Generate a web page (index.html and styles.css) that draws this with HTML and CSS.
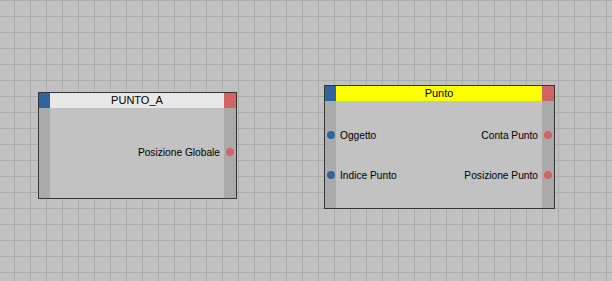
FILE: index.html
```html
<!DOCTYPE html>
<html lang="it">
<head>
  <meta charset="UTF-8">
  <meta name="viewport" content="width=device-width, initial-scale=1.0">
  <title>Nodi</title>
  <link rel="stylesheet" href="styles.css">
</head>
<body>
  <div class="canvas">
    <div class="node node-a">
      <div class="node-head">
        <span class="port-in"></span>
        <span class="title">PUNTO_A</span>
        <span class="port-out"></span>
      </div>
      <div class="node-body">
        <div class="row">
          <span></span>
          <span class="label right">Posizione Globale</span>
          <span class="dot out"></span>
        </div>
      </div>
    </div>

    <div class="node node-b">
      <div class="node-head">
        <span class="port-in"></span>
        <span class="title yellow">Punto</span>
        <span class="port-out"></span>
      </div>
      <div class="node-body">
        <div class="row">
          <span class="dot in"></span>
          <span class="label">Oggetto</span>
          <span class="label right">Conta Punto</span>
          <span class="dot out"></span>
        </div>
        <div class="row">
          <span class="dot in"></span>
          <span class="label">Indice Punto</span>
          <span class="label right">Posizione Punto</span>
          <span class="dot out"></span>
        </div>
      </div>
    </div>
  </div>
</body>
</html>
```

FILE: styles.css
```css
body {
  margin: 0;
  font-family: "Liberation Sans", Arial, sans-serif;
  font-size: 10.2px;
  color: #000;
}
.canvas {
  position: relative;
  width: 612px;
  height: 281px;
  background-color: #c1c1c1;
  background-image:
    linear-gradient(to right, #acacac 1px, transparent 1px),
    linear-gradient(to bottom, #acacac 1px, transparent 1px);
  background-size: 16px 16px;
  background-position: 14px 0;
  overflow: hidden;
}
.node {
  position: absolute;
  box-sizing: border-box;
  border: 1px solid #363636;
  display: flex;
  flex-direction: column;
  background: #c2c2c2;
}
.node-a {
  left: 38px;
  top: 92px;
  width: 199px;
  height: 107px;
}
.node-b {
  left: 324px;
  top: 85px;
  width: 231px;
  height: 124px;
}
.node-head {
  display: flex;
  height: 15px;
  flex-shrink: 0;
}
.port-in {
  width: 11px;
  background: #2f64a0;
}
.port-out {
  width: 12px;
  background: #d26466;
}
.title {
  flex: 1;
  background: #e8e8e8;
  text-align: center;
  line-height: 15px;
  font-size: 11px;
}
.title.yellow {
  background: #ffff00;
}
.node-body {
  flex: 1;
  display: flex;
  flex-direction: column;
  gap: 20px;
  background-image:
    linear-gradient(to right, #aaaaaa 11px, transparent 11px),
    linear-gradient(to left, #aaaaaa 12px, transparent 12px);
}
.node-a .node-body {
  padding-top: 34px;
}
.node-b .node-body {
  padding-top: 24px;
}
.row {
  display: grid;
  grid-template-columns: 11px auto 1fr 12px;
  align-items: center;
  height: 20px;
}
.node-a .row {
  grid-template-columns: 11px 1fr 12px;
}
.label {
  padding: 0 4px;
  white-space: nowrap;
}
.label.right {
  text-align: right;
}
.dot {
  width: 8px;
  height: 8px;
  border-radius: 50%;
  justify-self: center;
}
.dot.in {
  background: #2f64a0;
}
.dot.out {
  background: #d26466;
}
```
